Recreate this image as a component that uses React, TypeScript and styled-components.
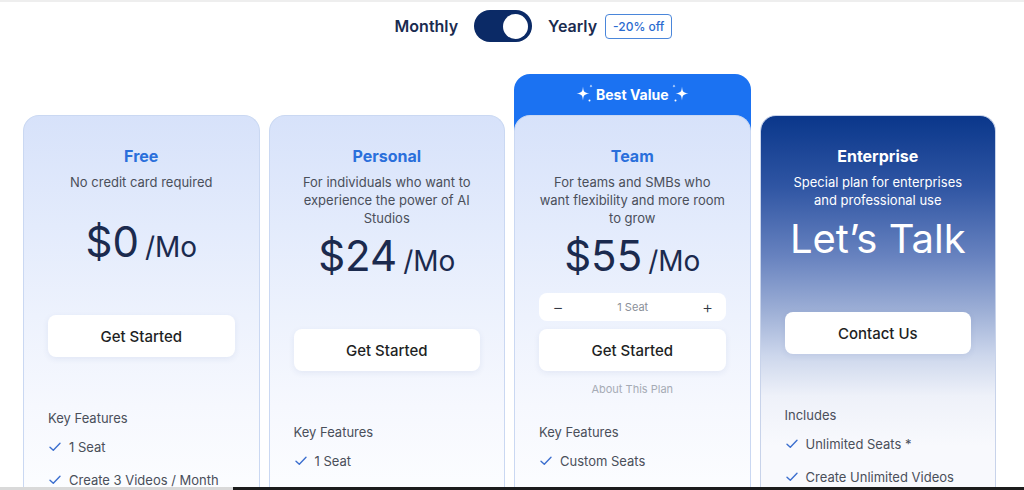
import styled, { createGlobalStyle } from 'styled-components'

const GlobalStyle = createGlobalStyle`
  html, body {
    margin: 0;
    padding: 0;
    height: 490px;
    overflow: hidden;
    background: #FFFFFF;
    font-family: 'Inter', 'Noto Sans', sans-serif;
  }
  * { box-sizing: border-box; }
`

const Page = styled.div`
  width: 1024px;
  height: 490px;
  overflow: hidden;
  border-top: 2px solid #EEEEEE;
`

const ToggleRow = styled.div`
  display: flex;
  align-items: center;
  justify-content: center;
  gap: 16px;
  padding: 0 0 0 43px;
  height: 48px;
`

const ToggleLabel = styled.span`
  font-size: 16px;
  font-weight: 600;
  color: #1A2B50;
  letter-spacing: 0px;
`

const Switch = styled.div`
  width: 58px;
  height: 32px;
  border-radius: 16px;
  background: #0B2A66;
  display: flex;
  align-items: center;
  justify-content: flex-end;
  padding: 0 4px;
`

const Knob = styled.div`
  width: 25px;
  height: 25px;
  border-radius: 50%;
  background: #FFFFFF;
`

const OffBadge = styled.span`
  margin-left: -8px;
  border: 1px solid #4A86DA;
  border-radius: 4px;
  padding: 4px 7px;
  font-size: 12px;
  font-weight: 500;
  color: #2A6BD0;
`

const Grid = styled.div`
  display: grid;
  grid-template-columns: repeat(4, minmax(0, 1fr));
  gap: 9px;
  padding: 24px 28px 0 23px;
  align-items: start;
`

const Column = styled.div<{ $featured?: boolean }>`
  display: flex;
  flex-direction: column;
  border-radius: 16px 16px 0 0;
  background: ${({ $featured }) => ($featured ? '#1B72F2' : 'transparent')};
`

const Ribbon = styled.div<{ $show?: boolean }>`
  height: 41px;
  display: flex;
  align-items: center;
  justify-content: center;
  gap: 1px;
  padding-bottom: 1px;
  color: #FFFFFF;
  font-size: 14px;
  font-weight: 700;
  visibility: ${({ $show }) => ($show ? 'visible' : 'hidden')};
`

const Card = styled.div<{ $dark?: boolean }>`
  min-height: 460px;
  border-radius: 16px 16px 0 0;
  border: 1px solid ${({ $dark }) => ($dark ? '#C8D3EA' : '#CAD8F2')};
  border-bottom: none;
  padding: 30px 24px 0;
  display: flex;
  flex-direction: column;
  align-items: stretch;
  background: ${({ $dark }) =>
    $dark
      ? 'linear-gradient(180deg, #0A378B 0px, #2F55A3 70px, #6782BF 140px, #9DAFD6 195px, #CDD7EC 240px, #EEF1F9 280px, #F8F9FD 330px)'
      : 'linear-gradient(180deg, #D7E2FA 0px, #E3EBFC 110px, #EDF2FD 200px, #F6F8FE 290px, #FCFDFF 380px)'};
`

const PlanName = styled.div<{ $dark?: boolean }>`
  text-align: center;
  font-size: 16px;
  font-weight: 700;
  line-height: 20px;
  color: ${({ $dark }) => ($dark ? '#FFFFFF' : '#2A6FDB')};
`

const PlanDesc = styled.div<{ $dark?: boolean; $single?: boolean }>`
  margin: 7px -4px 0;
  min-height: ${({ $single }) => ($single ? '40px' : '36px')};
  text-align: center;
  font-size: 13px;
  line-height: 18px;
  color: ${({ $dark }) => ($dark ? '#FFFFFF' : '#4A4F5A')};
`

const PriceRow = styled.div<{ $talk?: boolean }>`
  margin-top: ${({ $talk }) => ($talk ? '6px' : '5px')};
  height: 48px;
  display: flex;
  align-items: baseline;
  justify-content: center;
  gap: 6px;
  color: #1B2A4E;
`

const PriceValue = styled.span`
  font-size: 42px;
  line-height: 48px;
  font-weight: 400;
`

const PriceUnit = styled.span`
  font-size: 28px;
  font-weight: 400;
`

const TalkText = styled.span`
  font-size: 40px;
  line-height: 48px;
  font-weight: 400;
  color: #FFFFFF;
`

const SeatSlot = styled.div<{ $show?: boolean }>`
  margin-top: 13px;
  height: 28px;
  border-radius: 8px;
  background: #FFFFFF;
  display: flex;
  align-items: center;
  justify-content: space-between;
  padding: 0 12px 0 13px;
  visibility: ${({ $show }) => ($show ? 'visible' : 'hidden')};
`

const SeatSign = styled.span`
  font-size: 17px;
  font-weight: 300;
  color: #333844;
  width: 12px;
  text-align: center;
`

const SeatCount = styled.span`
  font-size: 11px;
  color: #8A8F99;
`

const ActionButton = styled.button`
  margin-top: 8px;
  height: 42px;
  border: none;
  border-radius: 8px;
  background: #FFFFFF;
  box-shadow: 0px 2px 6px rgba(40, 70, 140, 0.08);
  font-family: inherit;
  font-size: 15px;
  font-weight: 500;
  color: #1E1F24;
  cursor: pointer;
`

const AboutLink = styled.div<{ $show?: boolean }>`
  margin-top: 10px;
  height: 16px;
  text-align: center;
  font-size: 11px;
  line-height: 16px;
  color: #A6ABB5;
  visibility: ${({ $show }) => ($show ? 'visible' : 'hidden')};
`

const FeatureHeading = styled.div`
  margin-top: 26px;
  font-size: 13px;
  line-height: 18px;
  color: #4A4F5A;
`

const FeatureList = styled.ul`
  list-style: none;
  margin: 11px 0 0;
  padding: 0;
  display: flex;
  flex-direction: column;
  gap: 15px;
`

const FeatureItem = styled.li`
  display: flex;
  align-items: center;
  gap: 8px;
  font-size: 13px;
  line-height: 18px;
  color: #4A4F5A;
  padding-left: 1px;
`

const BottomEdge = styled.div`
  position: fixed;
  left: 0;
  right: 0;
  bottom: 0;
  height: 3px;
  display: flex;
`

const EdgeLight = styled.div`
  width: 233px;
  background: #D9D9D9;
`

const EdgeDark = styled.div`
  flex: 1;
  background: #1C1C1C;
`

const Check = () => (
  <svg width="12" height="10" viewBox="0 0 12 10" fill="none">
    <path d="M1 5.2 L4.3 8.3 L11 1.3" stroke="#3C6FCF" strokeWidth="1.4" strokeLinecap="round" strokeLinejoin="round" />
  </svg>
)

const Sparkle = ({ flip }: { flip?: boolean }) => (
  <svg width="20" height="22" viewBox="0 0 20 22" fill="#FFFFFF" style={flip ? { transform: 'scaleX(-1)' } : undefined}>
    <path d="M8 3.5 C8.5 9 9.2 9.6 14.5 10.5 C9.2 11.4 8.5 12 8 17.5 C7.5 12 6.8 11.4 1.5 10.5 C6.8 9.6 7.5 9 8 3.5 Z" />
    <path d="M16 1.2 C16.15 2.6 16.4 2.85 17.7 3 C16.4 3.15 16.15 3.4 16 4.8 C15.85 3.4 15.6 3.15 14.3 3 C15.6 2.85 15.85 2.6 16 1.2 Z" />
    <circle cx="14.5" cy="17.5" r="1" />
  </svg>
)

interface Plan {
  name: string
  desc: string
  price?: string
  featured?: boolean
  dark?: boolean
  cta: string
  heading: string
  features: string[]
}

const plans: Plan[] = [
  {
    name: 'Free',
    desc: 'No credit card required',
    price: '$0',
    cta: 'Get Started',
    heading: 'Key Features',
    features: ['1 Seat', 'Create 3 Videos / Month', 'Up to 10 Minutes']
  },
  {
    name: 'Personal',
    desc: 'For individuals who want to experience the power of AI Studios',
    price: '$24',
    cta: 'Get Started',
    heading: 'Key Features',
    features: ['1 Seat', 'Create 10 Videos / Month', 'Up to 10 Minutes']
  },
  {
    name: 'Team',
    desc: 'For teams and SMBs who want flexibility and more room to grow',
    price: '$55',
    featured: true,
    cta: 'Get Started',
    heading: 'Key Features',
    features: ['Custom Seats', 'Create 20 Videos / Month', 'Up to 30 Minutes']
  },
  {
    name: 'Enterprise',
    desc: 'Special plan for enterprises and professional use',
    dark: true,
    cta: 'Contact Us',
    heading: 'Includes',
    features: ['Unlimited Seats *', 'Create Unlimited Videos', 'Custom Avatars']
  }
]

const PlanCard = ({ plan }: { plan: Plan }) => (
  <Column $featured={plan.featured}>
    <Ribbon $show={plan.featured}>
      <Sparkle />
      Best Value
      <Sparkle flip />
    </Ribbon>
    <Card $dark={plan.dark}>
      <PlanName $dark={plan.dark}>{plan.name}</PlanName>
      <PlanDesc $dark={plan.dark} $single={plan.name === 'Free'}>
        {plan.name === 'Team' ? (
          <>
            For teams and SMBs who
            <br />
            want flexibility and more room
            <br />
            to grow
          </>
        ) : (
          plan.desc
        )}
      </PlanDesc>
      <PriceRow $talk={!plan.price}>
        {plan.price ? (
          <>
            <PriceValue>{plan.price}</PriceValue>
            <PriceUnit>/Mo</PriceUnit>
          </>
        ) : (
          <TalkText>Let’s Talk</TalkText>
        )}
      </PriceRow>
      <SeatSlot $show={plan.featured}>
        <SeatSign>−</SeatSign>
        <SeatCount>1 Seat</SeatCount>
        <SeatSign>+</SeatSign>
      </SeatSlot>
      <ActionButton>{plan.cta}</ActionButton>
      <AboutLink $show={plan.featured}>About This Plan</AboutLink>
      <FeatureHeading>{plan.heading}</FeatureHeading>
      <FeatureList>
        {plan.features.map((f) => (
          <FeatureItem key={f}>
            <Check />
            {f}
          </FeatureItem>
        ))}
      </FeatureList>
    </Card>
  </Column>
)

export default function App() {
  return (
    <>
      <GlobalStyle />
      <Page>
        <ToggleRow>
          <ToggleLabel>Monthly</ToggleLabel>
          <Switch>
            <Knob />
          </Switch>
          <ToggleLabel>Yearly</ToggleLabel>
          <OffBadge>-20% off</OffBadge>
        </ToggleRow>
        <Grid>
          {plans.map((p) => (
            <PlanCard key={p.name} plan={p} />
          ))}
        </Grid>
      </Page>
      <BottomEdge>
        <EdgeLight />
        <EdgeDark />
      </BottomEdge>
    </>
  )
}
